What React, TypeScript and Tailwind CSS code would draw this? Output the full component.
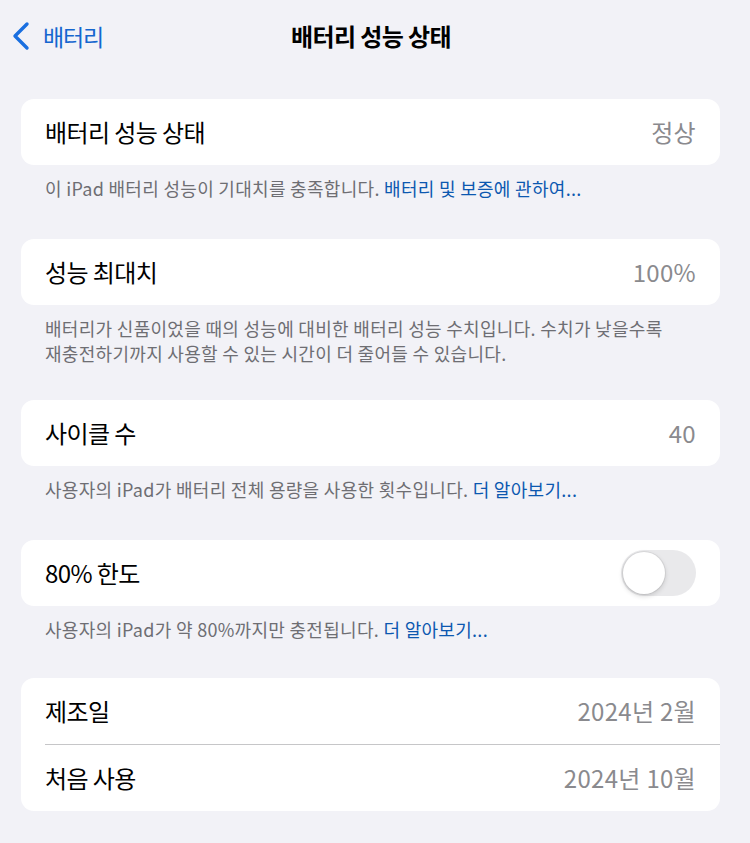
import React from "react";

const font = { fontFamily: '"Noto Sans CJK KR", "Noto Sans", sans-serif' };

function Row({ label, value }: { label: string; value?: React.ReactNode }) {
  return (
    <div className="flex h-[66px] items-center justify-between pl-6 pr-6">
      <span className="text-[24px] tracking-[-0.6px] text-black">{label}</span>
      {value}
    </div>
  );
}

function Footer({ children }: { children: React.ReactNode }) {
  return (
    <div className="px-[45px] pt-[11px] text-[18px] leading-[25px] tracking-[0.3px] text-[#6e6e73]">
      {children}
    </div>
  );
}

function Link({ children }: { children: React.ReactNode }) {
  return <span className="text-[#0c58b0]">{children}</span>;
}

function Value({ children }: { children: React.ReactNode }) {
  return <span className="text-[24px] tracking-[0.3px] text-[#8a8a8e]">{children}</span>;
}

export default function App() {
  return (
    <div style={font} className="min-h-[843px] w-[750px] bg-[#f2f2f7]">
      <div className="relative flex h-[72px] items-center">
        <div className="flex items-center pl-[11px]">
          <svg width="20" height="30" viewBox="0 0 20 30" className="mr-[12px]">
            <path d="M16 3 L4 15 L16 27" fill="none" stroke="#1a6fe0" strokeWidth="3.4" strokeLinecap="round" strokeLinejoin="round" />
          </svg>
          <span className="text-[23px] tracking-[-1.2px] text-[#1566cf]">배터리</span>
        </div>
        <div className="absolute left-0 right-0 top-0 flex h-[72px] items-center justify-center">
          <span className="ml-[-8px] text-[24px] font-bold tracking-[-0.6px] text-black">배터리 성능 상태</span>
        </div>
      </div>

      <div className="mt-[27px] pl-[21px] pr-[30px]">
        <div className="rounded-[13px] bg-white">
          <Row label="배터리 성능 상태" value={<Value>정상</Value>} />
        </div>
      </div>
      <Footer>
        이 iPad 배터리 성능이 기대치를 충족합니다. <Link>배터리 및 보증에 관하여...</Link>
      </Footer>

      <div className="mt-[38px] pl-[21px] pr-[30px]">
        <div className="rounded-[13px] bg-white">
          <Row label="성능 최대치" value={<Value>100%</Value>} />
        </div>
      </div>
      <Footer>
        배터리가 신품이었을 때의 성능에 대비한 배터리 성능 수치입니다. 수치가 낮을수록
        <br />
        재충전하기까지 사용할 수 있는 시간이 더 줄어들 수 있습니다.
      </Footer>

      <div className="mt-[34px] pl-[21px] pr-[30px]">
        <div className="rounded-[13px] bg-white">
          <Row label="사이클 수" value={<Value>40</Value>} />
        </div>
      </div>
      <Footer>
        사용자의 iPad가 배터리 전체 용량을 사용한 횟수입니다. <Link>더 알아보기...</Link>
      </Footer>

      <div className="mt-[38px] pl-[21px] pr-[30px]">
        <div className="rounded-[13px] bg-white">
          <Row
            label="80% 한도"
            value={
              <div className="relative h-[46px] w-[75px] rounded-full bg-[#e9e9eb]">
                <div className="absolute left-[2px] top-[2px] h-[42px] w-[42px] rounded-full bg-white shadow-[0_2px_5px_rgba(0,0,0,0.16),0_0_0_1px_rgba(0,0,0,0.06)]" />
              </div>
            }
          />
        </div>
      </div>
      <Footer>
        사용자의 iPad가 약 80%까지만 충전됩니다. <Link>더 알아보기...</Link>
      </Footer>

      <div className="mt-[36px] pl-[21px] pr-[30px]">
        <div className="rounded-[13px] bg-white">
          <Row label="제조일" value={<Value>2024년 2월</Value>} />
          <div className="ml-[24px] h-px bg-[#c6c6c8]" />
          <Row label="처음 사용" value={<Value>2024년 10월</Value>} />
        </div>
      </div>
    </div>
  );
}
